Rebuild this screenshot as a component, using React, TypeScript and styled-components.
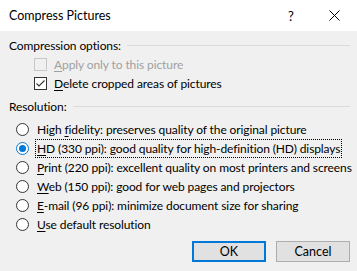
import React, {FC} from "react";
import styled, {createGlobalStyle} from "styled-components";

const GlobalStyle = createGlobalStyle`
  html, body {
    margin: 0;
    padding: 0;
    background: #f0f0f0;
  }
  body {
    font-family: Lato, "Liberation Sans", sans-serif;
    font-size: 12px;
    color: #000;
  }
`;

const Dialog = styled.div`
  width: 357px;
  height: 271px;
  display: flex;
  flex-flow: column nowrap;
  background: #f0f0f0;
  overflow: hidden;
`;

const TitleBar = styled.div`
  height: 31px;
  flex: none;
  display: flex;
  align-items: center;
  background: #ffffff;
  padding-left: 9px;
  font-size: 12.5px;

  .title {
    flex: 1;
  }
`;

const TitleButton = styled.div<{ $width: number }>`
  width: ${p => p.$width}px;
  height: 31px;
  display: flex;
  align-items: center;
  justify-content: center;
  font-size: 13px;
`;

const Body = styled.div`
  display: flex;
  flex-flow: column nowrap;
  padding: 5px 7px 0 9px;
  font-size: 12px;
  letter-spacing: -0.1px;
`;

const GroupHeader = styled.div<{ $top: number }>`
  height: 19px;
  margin-top: ${p => p.$top}px;
  display: flex;
  align-items: center;
  gap: 6px;

  .rule {
    flex: 1;
    height: 1px;
    background: #dadada;
  }
`;

const OptionRow = styled.div<{ $indent: number; $disabled?: boolean }>`
  height: 19px;
  display: flex;
  align-items: center;
  padding-left: ${p => p.$indent}px;
  color: ${p => (p.$disabled ? "#a0a0a0" : "#000")};
  white-space: nowrap;

  u {
    text-decoration-thickness: 1px;
    text-underline-offset: 2px;
  }
`;

const CheckBox = styled.div<{ $disabled?: boolean }>`
  width: 11px;
  height: 11px;
  border: 1px solid ${p => (p.$disabled ? "#c8c8c8" : "#333333")};
  background: ${p => (p.$disabled ? "#f0f0f0" : "#ffffff")};
  margin-right: 8px;
  display: flex;
  align-items: center;
  justify-content: center;
  flex: none;
`;

const Radio = styled.div<{ $checked?: boolean }>`
  width: 11px;
  height: 11px;
  border-radius: 50%;
  border: 1px solid ${p => (p.$checked ? "#0078d7" : "#333333")};
  background: #ffffff;
  margin-right: 9px;
  display: flex;
  align-items: center;
  justify-content: center;
  flex: none;

  .dot {
    width: 7px;
    height: 7px;
    border-radius: 50%;
    background: #0078d7;
  }
`;

const Label = styled.span<{ $focused?: boolean }>`
  padding: 1px 1px;
  margin-left: -2px;
  outline: ${p => (p.$focused ? "1px dotted #000" : "none")};
`;

const ButtonBar = styled.div`
  margin-top: auto;
  width: 357px;
  box-sizing: border-box;
  display: flex;
  justify-content: flex-end;
  gap: 10px;
  padding: 0 7px 9px 0;
`;

const Button = styled.button<{ $default?: boolean }>`
  width: 74px;
  height: 21px;
  box-sizing: border-box;
  font-family: inherit;
  font-size: 12.5px;
  color: #000;
  background: #e1e1e1;
  border: ${p => (p.$default ? "2px solid #0078d7" : "1px solid #adadad")};
  padding: 0;
`;

interface RadioOption {
  key: string;
  rest: string;
  pre?: string;
  checked?: boolean;
}

const radioOptions: RadioOption[] = [
  {pre: "High ", key: "f", rest: "idelity: preserves quality of the original picture"},
  {key: "H", rest: "D (330 ppi): good quality for high-definition (HD) displays", checked: true},
  {key: "P", rest: "rint (220 ppi): excellent quality on most printers and screens"},
  {key: "W", rest: "eb (150 ppi): good for web pages and projectors"},
  {key: "E", rest: "-mail (96 ppi): minimize document size for sharing"},
  {key: "U", rest: "se default resolution"},
];

const CheckMark: FC = () => (
  <svg width="11" height="11" viewBox="0 0 11 11">
    <path d="M1.5 5.5 L4 8 L9.5 2.5" fill="none" stroke="#333" strokeWidth="1.1"/>
  </svg>
);

export default function App() {
  return (
    <Dialog>
      <GlobalStyle/>
      <TitleBar>
        <span className="title">Compress Pictures</span>
        <TitleButton $width={40}>?</TitleButton>
        <TitleButton $width={46}>
          <svg width="11" height="11" viewBox="0 0 11 11">
            <path d="M0.5 0.5 L10.5 10.5 M10.5 0.5 L0.5 10.5" stroke="#000" strokeWidth="1"/>
          </svg>
        </TitleButton>
      </TitleBar>
      <Body>
        <GroupHeader $top={0}>
          <span>Compression options:</span>
          <div className="rule"/>
        </GroupHeader>
        <OptionRow $indent={25} $disabled>
          <CheckBox $disabled/>
          <Label><u>A</u>pply only to this picture</Label>
        </OptionRow>
        <OptionRow $indent={25}>
          <CheckBox><CheckMark/></CheckBox>
          <Label><u>D</u>elete cropped areas of pictures</Label>
        </OptionRow>

        <GroupHeader $top={4}>
          <span>Resolution:</span>
          <div className="rule"/>
        </GroupHeader>
        <div style={{height: 4}}/>
        {radioOptions.map(opt => (
          <OptionRow $indent={7} key={opt.rest}>
            <Radio $checked={opt.checked}>{opt.checked && <div className="dot"/>}</Radio>
            <Label $focused={opt.checked}>{opt.pre}<u>{opt.key}</u>{opt.rest}</Label>
          </OptionRow>
        ))}
      </Body>
      <ButtonBar>
        <Button $default>OK</Button>
        <Button>Cancel</Button>
      </ButtonBar>
    </Dialog>
  );
}
